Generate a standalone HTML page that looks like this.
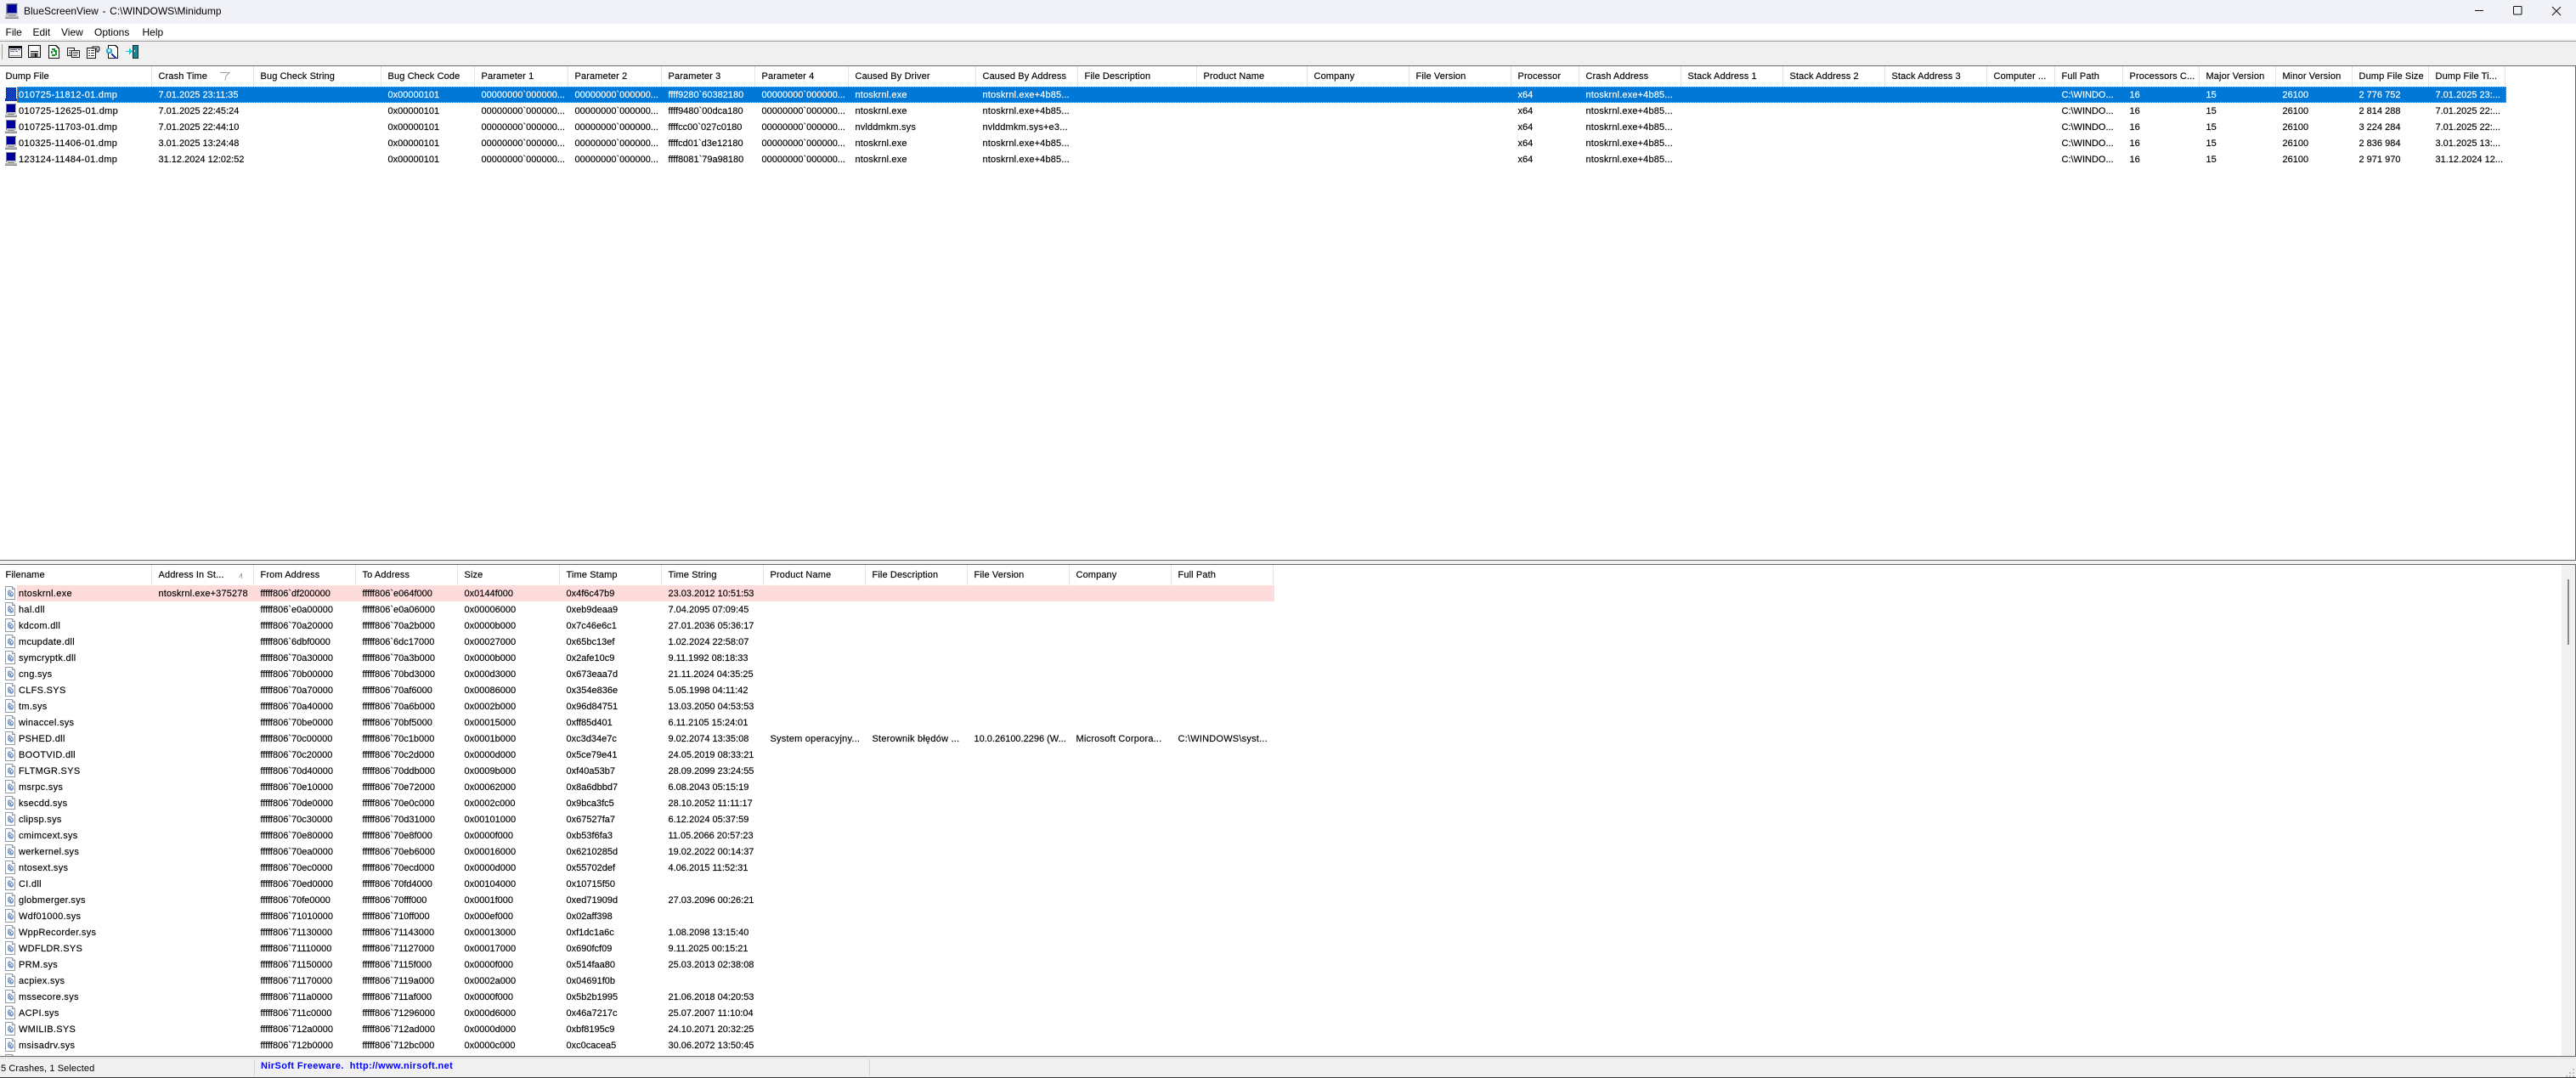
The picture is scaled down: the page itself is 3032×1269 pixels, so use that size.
<!DOCTYPE html>
<html lang="pl"><head><meta charset="utf-8"><title>BlueScreenView</title>
<style>
html,body{margin:0;padding:0;width:3032px;height:1269px;overflow:hidden;background:#fff}
body{position:relative;font-family:"Liberation Sans","DejaVu Sans",sans-serif;font-size:11px;color:#000}
.a{position:absolute}
table{border-collapse:separate;border-spacing:0;table-layout:fixed;position:absolute;left:0;-webkit-text-stroke:.15px currentColor}
th,td{padding:0 0 0 6.5px;margin:0;overflow:hidden;white-space:nowrap;font-weight:normal;text-align:left;box-sizing:border-box}
th{height:25px;line-height:24px;vertical-align:top;border-right:1px solid #e5e5e5;background:linear-gradient(#fff 24px,transparent 24px);letter-spacing:.12px;border-right-color:transparent;background-image:linear-gradient(#e5e5e5,#e5e5e5);background-size:1px 24px;background-position:right top;background-repeat:no-repeat}
td{height:19px;line-height:19px}
td.f{padding-left:22px;position:relative;letter-spacing:.3px}
td.f svg{position:absolute;left:5px;top:0}
tr.s td{color:#fff}
.u td:nth-child(9),.u td:nth-child(10),.u td:nth-child(16){letter-spacing:.15px}
.l td:nth-child(2){letter-spacing:.15px}
.l td:nth-child(8),.l td:nth-child(9),.l td:nth-child(11),.l td:nth-child(12){letter-spacing:.22px}
</style></head><body>
<svg width="0" height="0" style="position:absolute"><defs>
<pattern id="dz" width="2" height="2" patternUnits="userSpaceOnUse"><rect width="2" height="2" fill="#0078d7"/><rect width="1" height="1" fill="#00009a"/><rect x="1" y="1" width="1" height="1" fill="#00009a"/></pattern>
<symbol id="mon" viewBox="0 0 15 16"><path d="M2 0h12v12H2z" fill="#c0c0c0"/><path d="M3 1h10v9H3z" fill="#00009c"/><path d="M2 0h12v1H2zM2 0h1v12H2z" fill="#808080"/><path d="M4 12h8v1H4z" fill="#909090"/><path d="M1 13h14v2H1z" fill="#b8b8b8"/><path d="M1 15h14v1H1z" fill="#808080"/></symbol>
<symbol id="monS" viewBox="0 0 15 16"><path d="M2 0h12v13H2zM1 13h14v3H1z" fill="url(#dz)"/></symbol>
<symbol id="pg" viewBox="0 0 14 16"><path d="M1.5.5h8l3 3v12h-11z" fill="#fff" stroke="#8f9aa5"/><path d="M9.5.5v3h3" fill="#e6e6e6" stroke="#8f9aa5"/><path d="M4 6l2-2 3 2 2 2v3l-2 2-3-1-2-2z" fill="#7d9ecf"/><path d="M5.500 6.500h2.500v1.500h1.500v2H7l-1.500-1.500z" fill="#fff"/><path d="M6 7.500l2 2" stroke="#2b4f9a" stroke-width="1"/></symbol>
</defs></svg>

<div class="a" style="left:0;top:0;width:3032px;height:28px;background:#f0f2f8"></div>
<svg class="a" style="left:5px;top:4px" width="17" height="18" viewBox="0 0 15 16"><use href="#mon"/></svg>
<div class="a" style="left:28px;top:4px;font-size:12px;line-height:18px;white-space:pre;word-spacing:-1px">BlueScreenView  -  C:\WINDOWS\Minidump</div>
<svg class="a" style="left:2900px;top:0" width="132" height="28" fill="none" stroke="#111" stroke-width="1"><path d="M13 12.500h10"/><rect x="58.500" y="7.500" width="9.500" height="9.500" rx="1"/><path d="M104 8l10 10M114 8l-10 10"/></svg>

<div class="a" style="left:0;top:28px;width:3032px;height:18px;background:#fff"></div>
<div class="a" style="left:6.500px;top:29px;font-size:12px;line-height:18px">File</div>
<div class="a" style="left:38.500px;top:29px;font-size:12px;line-height:18px">Edit</div>
<div class="a" style="left:72px;top:29px;font-size:12px;line-height:18px">View</div>
<div class="a" style="left:111px;top:29px;font-size:12px;line-height:18px">Options</div>
<div class="a" style="left:167.500px;top:29px;font-size:12px;line-height:18px">Help</div>

<div class="a" style="left:0;top:46px;width:3032px;height:31px;background:#f0f0f0"></div>
<div class="a" style="left:0;top:48px;width:3032px;height:1px;background:#a0a0a0"></div>
<div class="a" style="left:0;top:77px;width:3032px;height:1px;background:#696969"></div>
<div class="a" style="left:2px;top:52px;width:1px;height:18px;background:#a0a0a0"></div>
<svg class="a" style="left:0;top:50px" width="180" height="26" viewBox="0 50 180 26" shape-rendering="crispEdges">
<path d="M10 54h16v14H10z" fill="#111"/><path d="M11 55h14v2H11z" fill="#111"/><path d="M11 57h14v10H11z" fill="#f4f4f4"/><path d="M12 58h8v1h-8zM21 58h3v1h-3z" fill="#405a90"/><path d="M12 60h5v1h-5zM18 60h3v1h-3z" fill="#777"/><path d="M12 65h12v1H12z" fill="#999"/>
<path d="M33 53h15v15H33z" fill="#111"/><path d="M34 54h13v13H34z" fill="#e8e8e8"/><path d="M36 54h9v6h-9z" fill="#fff"/><path d="M36 60h9v1h-9z" fill="#111"/><path d="M36 62h9v5h-9z" fill="#777"/><path d="M41 63h2v4h-2z" fill="#111"/>
<path d="M57 53h9l4 4v12H57z" fill="#111"/><path d="M58 54h7l4 4v10H58z" fill="#fff"/><path d="M61 57h4v2h2v2h-4v-2h-2zM60 60h2v3h-2zM65 61h2v4h-2zM61 64h4v2h-4z" fill="#0b9a2c"/>
<path d="M79 56h9v10h-9z" fill="#222"/><path d="M80 57h7v8h-7z" fill="#fff"/><path d="M81 59h5v1h-5zM81 61h5v1h-5zM81 63h4v1h-4z" fill="#555"/><path d="M84 59h10v9H84z" fill="#222"/><path d="M85 60h8v7h-8z" fill="#fff"/><path d="M86 61h6v1h-6zM86 63h6v1h-6zM86 65h5v1h-5z" fill="#555"/>
<path d="M102 56h11v13h-11z" fill="#111"/><path d="M103 57h9v11h-9z" fill="#fff"/><path d="M104 59h2v1h-2zM107 59h4v1h-4zM104 62h2v1h-2zM107 62h4v1h-4zM104 65h2v1h-2zM107 65h4v1h-4z" fill="#333"/><path d="M109 55h7v1h1v3h-1v2h-2v-4h-5z" fill="#fff" stroke="#111" stroke-width=".6"/>
<path d="M127 53h9l3 3v13h-12z" fill="#111"/><path d="M128 54h7l3 3v11h-10z" fill="#fff"/><path d="M126 57h5v1h1v4h-1v1h-5v-1h-1v-4h1z" fill="#30a8c8"/><path d="M127 58h3v3h-3z" fill="#c8f0ff"/><path d="M131 63h2v1h1v1h1v1h1v1h1v2h-2v-1h-1v-1h-1v-1h-1v-1h-1z" fill="#1c3fb8"/>
<path d="M156 53h7v16h-7z" fill="#0d2a30"/><path d="M157 54h5v14h-5z" fill="#108b96"/><path d="M158 59h1v2h-1z" fill="#fff"/><path d="M148 60h4v-3h1v1h1v1h1v1h1v1h-1v1h-1v1h-1v1h-1v-3h-4z" fill="#18c8d8"/>
</svg>

<!-- upper list -->
<div class="a" style="left:20px;top:102px;width:2930px;height:19px;background:#0078d7;border:1px dotted #ff9a1e;box-sizing:border-box"></div>
<div class="a" style="left:3031px;top:78px;width:1px;height:581px;background:#696969"></div>
<div class="a" style="left:0;top:659px;width:3032px;height:1px;background:#696969"></div>
<div class="a" style="left:0;top:660px;width:3032px;height:4px;background:#f0f0f0"></div>
<table class="u" style="top:78px;width:2950px">
<colgroup><col style="width:180px"><col style="width:120px"><col style="width:150px"><col style="width:110px"><col style="width:110px"><col style="width:110px"><col style="width:110px"><col style="width:110px"><col style="width:150px"><col style="width:120px"><col style="width:140px"><col style="width:130px"><col style="width:120px"><col style="width:120px"><col style="width:80px"><col style="width:120px"><col style="width:120px"><col style="width:120px"><col style="width:120px"><col style="width:80px"><col style="width:80px"><col style="width:90px"><col style="width:90px"><col style="width:90px"><col style="width:90px"><col style="width:90px"></colgroup>
<tr><th>Dump File</th><th>Crash Time</th><th>Bug Check String</th><th>Bug Check Code</th><th>Parameter 1</th><th>Parameter 2</th><th>Parameter 3</th><th>Parameter 4</th><th>Caused By Driver</th><th>Caused By Address</th><th>File Description</th><th>Product Name</th><th>Company</th><th>File Version</th><th>Processor</th><th>Crash Address</th><th>Stack Address 1</th><th>Stack Address 2</th><th>Stack Address 3</th><th>Computer ...</th><th>Full Path</th><th>Processors C...</th><th>Major Version</th><th>Minor Version</th><th>Dump File Size</th><th>Dump File Ti...</th></tr>
<tr class="s"><td class="f"><svg width="15" height="16"><use href="#monS"/></svg>010725-11812-01.dmp</td><td>7.01.2025 23:11:35</td><td></td><td>0x00000101</td><td>00000000`000000...</td><td>00000000`000000...</td><td>ffff9280`60382180</td><td>00000000`000000...</td><td>ntoskrnl.exe</td><td>ntoskrnl.exe+4b85...</td><td></td><td></td><td></td><td></td><td>x64</td><td>ntoskrnl.exe+4b85...</td><td></td><td></td><td></td><td></td><td>C:\WINDO...</td><td>16</td><td>15</td><td>26100</td><td>2 776 752</td><td>7.01.2025 23:...</td></tr>
<tr><td class="f"><svg width="15" height="16"><use href="#mon"/></svg>010725-12625-01.dmp</td><td>7.01.2025 22:45:24</td><td></td><td>0x00000101</td><td>00000000`000000...</td><td>00000000`000000...</td><td>ffff9480`00dca180</td><td>00000000`000000...</td><td>ntoskrnl.exe</td><td>ntoskrnl.exe+4b85...</td><td></td><td></td><td></td><td></td><td>x64</td><td>ntoskrnl.exe+4b85...</td><td></td><td></td><td></td><td></td><td>C:\WINDO...</td><td>16</td><td>15</td><td>26100</td><td>2 814 288</td><td>7.01.2025 22:...</td></tr>
<tr><td class="f"><svg width="15" height="16"><use href="#mon"/></svg>010725-11703-01.dmp</td><td>7.01.2025 22:44:10</td><td></td><td>0x00000101</td><td>00000000`000000...</td><td>00000000`000000...</td><td>ffffcc00`027c0180</td><td>00000000`000000...</td><td>nvlddmkm.sys</td><td>nvlddmkm.sys+e3...</td><td></td><td></td><td></td><td></td><td>x64</td><td>ntoskrnl.exe+4b85...</td><td></td><td></td><td></td><td></td><td>C:\WINDO...</td><td>16</td><td>15</td><td>26100</td><td>3 224 284</td><td>7.01.2025 22:...</td></tr>
<tr><td class="f"><svg width="15" height="16"><use href="#mon"/></svg>010325-11406-01.dmp</td><td>3.01.2025 13:24:48</td><td></td><td>0x00000101</td><td>00000000`000000...</td><td>00000000`000000...</td><td>ffffcd01`d3e12180</td><td>00000000`000000...</td><td>ntoskrnl.exe</td><td>ntoskrnl.exe+4b85...</td><td></td><td></td><td></td><td></td><td>x64</td><td>ntoskrnl.exe+4b85...</td><td></td><td></td><td></td><td></td><td>C:\WINDO...</td><td>16</td><td>15</td><td>26100</td><td>2 836 984</td><td>3.01.2025 13:...</td></tr>
<tr><td class="f"><svg width="15" height="16"><use href="#mon"/></svg>123124-11484-01.dmp</td><td>31.12.2024 12:02:52</td><td></td><td>0x00000101</td><td>00000000`000000...</td><td>00000000`000000...</td><td>ffff8081`79a98180</td><td>00000000`000000...</td><td>ntoskrnl.exe</td><td>ntoskrnl.exe+4b85...</td><td></td><td></td><td></td><td></td><td>x64</td><td>ntoskrnl.exe+4b85...</td><td></td><td></td><td></td><td></td><td>C:\WINDO...</td><td>16</td><td>15</td><td>26100</td><td>2 971 970</td><td>31.12.2024 12...</td></tr>
</table>
<svg class="a" style="left:258px;top:84px" width="14" height="12" fill="none" stroke="#a0a0a0"><path d="M1 1.500h11L8 5.500 7 10.500"/></svg>

<!-- lower list -->
<div class="a" style="left:0;top:664px;width:3032px;height:1px;background:#696969"></div>
<div class="a" style="left:3031px;top:665px;width:1px;height:578px;background:#696969"></div>
<div class="a" style="left:3015px;top:665px;width:16px;height:578px;background:#f0f0f0"></div>
<div class="a" style="left:3022px;top:682px;width:2px;height:77px;background:#8a8a8a"></div>
<div class="a" style="left:20px;top:689px;width:1480px;height:19px;background:#ffdcdc"></div>
<div class="a" style="left:0;top:665px;width:1500px;height:578px;overflow:hidden">
<table class="l" style="top:0;width:1500px">
<colgroup><col style="width:180px"><col style="width:120px"><col style="width:120px"><col style="width:120px"><col style="width:120px"><col style="width:120px"><col style="width:120px"><col style="width:120px"><col style="width:120px"><col style="width:120px"><col style="width:120px"><col style="width:120px"></colgroup>
<tr><th>Filename</th><th>Address In St...</th><th>From Address</th><th>To Address</th><th>Size</th><th>Time Stamp</th><th>Time String</th><th>Product Name</th><th>File Description</th><th>File Version</th><th>Company</th><th>Full Path</th></tr>
<tr><td class="f"><svg width="14" height="16"><use href="#pg"/></svg>ntoskrnl.exe</td><td>ntoskrnl.exe+375278</td><td>fffff806`df200000</td><td>fffff806`e064f000</td><td>0x0144f000</td><td>0x4f6c47b9</td><td>23.03.2012 10:51:53</td></tr>
<tr><td class="f"><svg width="14" height="16"><use href="#pg"/></svg>hal.dll</td><td></td><td>fffff806`e0a00000</td><td>fffff806`e0a06000</td><td>0x00006000</td><td>0xeb9deaa9</td><td>7.04.2095 07:09:45</td></tr>
<tr><td class="f"><svg width="14" height="16"><use href="#pg"/></svg>kdcom.dll</td><td></td><td>fffff806`70a20000</td><td>fffff806`70a2b000</td><td>0x0000b000</td><td>0x7c46e6c1</td><td>27.01.2036 05:36:17</td></tr>
<tr><td class="f"><svg width="14" height="16"><use href="#pg"/></svg>mcupdate.dll</td><td></td><td>fffff806`6dbf0000</td><td>fffff806`6dc17000</td><td>0x00027000</td><td>0x65bc13ef</td><td>1.02.2024 22:58:07</td></tr>
<tr><td class="f"><svg width="14" height="16"><use href="#pg"/></svg>symcryptk.dll</td><td></td><td>fffff806`70a30000</td><td>fffff806`70a3b000</td><td>0x0000b000</td><td>0x2afe10c9</td><td>9.11.1992 08:18:33</td></tr>
<tr><td class="f"><svg width="14" height="16"><use href="#pg"/></svg>cng.sys</td><td></td><td>fffff806`70b00000</td><td>fffff806`70bd3000</td><td>0x000d3000</td><td>0x673eaa7d</td><td>21.11.2024 04:35:25</td></tr>
<tr><td class="f"><svg width="14" height="16"><use href="#pg"/></svg>CLFS.SYS</td><td></td><td>fffff806`70a70000</td><td>fffff806`70af6000</td><td>0x00086000</td><td>0x354e836e</td><td>5.05.1998 04:11:42</td></tr>
<tr><td class="f"><svg width="14" height="16"><use href="#pg"/></svg>tm.sys</td><td></td><td>fffff806`70a40000</td><td>fffff806`70a6b000</td><td>0x0002b000</td><td>0x96d84751</td><td>13.03.2050 04:53:53</td></tr>
<tr><td class="f"><svg width="14" height="16"><use href="#pg"/></svg>winaccel.sys</td><td></td><td>fffff806`70be0000</td><td>fffff806`70bf5000</td><td>0x00015000</td><td>0xff85d401</td><td>6.11.2105 15:24:01</td></tr>
<tr><td class="f"><svg width="14" height="16"><use href="#pg"/></svg>PSHED.dll</td><td></td><td>fffff806`70c00000</td><td>fffff806`70c1b000</td><td>0x0001b000</td><td>0xc3d34e7c</td><td>9.02.2074 13:35:08</td><td>System operacyjny...</td><td>Sterownik błędów ...</td><td>10.0.26100.2296 (W...</td><td>Microsoft Corpora...</td><td>C:\WINDOWS\syst...</td></tr>
<tr><td class="f"><svg width="14" height="16"><use href="#pg"/></svg>BOOTVID.dll</td><td></td><td>fffff806`70c20000</td><td>fffff806`70c2d000</td><td>0x0000d000</td><td>0x5ce79e41</td><td>24.05.2019 08:33:21</td></tr>
<tr><td class="f"><svg width="14" height="16"><use href="#pg"/></svg>FLTMGR.SYS</td><td></td><td>fffff806`70d40000</td><td>fffff806`70ddb000</td><td>0x0009b000</td><td>0xf40a53b7</td><td>28.09.2099 23:24:55</td></tr>
<tr><td class="f"><svg width="14" height="16"><use href="#pg"/></svg>msrpc.sys</td><td></td><td>fffff806`70e10000</td><td>fffff806`70e72000</td><td>0x00062000</td><td>0x8a6dbbd7</td><td>6.08.2043 05:15:19</td></tr>
<tr><td class="f"><svg width="14" height="16"><use href="#pg"/></svg>ksecdd.sys</td><td></td><td>fffff806`70de0000</td><td>fffff806`70e0c000</td><td>0x0002c000</td><td>0x9bca3fc5</td><td>28.10.2052 11:11:17</td></tr>
<tr><td class="f"><svg width="14" height="16"><use href="#pg"/></svg>clipsp.sys</td><td></td><td>fffff806`70c30000</td><td>fffff806`70d31000</td><td>0x00101000</td><td>0x67527fa7</td><td>6.12.2024 05:37:59</td></tr>
<tr><td class="f"><svg width="14" height="16"><use href="#pg"/></svg>cmimcext.sys</td><td></td><td>fffff806`70e80000</td><td>fffff806`70e8f000</td><td>0x0000f000</td><td>0xb53f6fa3</td><td>11.05.2066 20:57:23</td></tr>
<tr><td class="f"><svg width="14" height="16"><use href="#pg"/></svg>werkernel.sys</td><td></td><td>fffff806`70ea0000</td><td>fffff806`70eb6000</td><td>0x00016000</td><td>0x6210285d</td><td>19.02.2022 00:14:37</td></tr>
<tr><td class="f"><svg width="14" height="16"><use href="#pg"/></svg>ntosext.sys</td><td></td><td>fffff806`70ec0000</td><td>fffff806`70ecd000</td><td>0x0000d000</td><td>0x55702def</td><td>4.06.2015 11:52:31</td></tr>
<tr><td class="f"><svg width="14" height="16"><use href="#pg"/></svg>CI.dll</td><td></td><td>fffff806`70ed0000</td><td>fffff806`70fd4000</td><td>0x00104000</td><td>0x10715f50</td><td></td></tr>
<tr><td class="f"><svg width="14" height="16"><use href="#pg"/></svg>globmerger.sys</td><td></td><td>fffff806`70fe0000</td><td>fffff806`70fff000</td><td>0x0001f000</td><td>0xed71909d</td><td>27.03.2096 00:26:21</td></tr>
<tr><td class="f"><svg width="14" height="16"><use href="#pg"/></svg>Wdf01000.sys</td><td></td><td>fffff806`71010000</td><td>fffff806`710ff000</td><td>0x000ef000</td><td>0x02aff398</td><td></td></tr>
<tr><td class="f"><svg width="14" height="16"><use href="#pg"/></svg>WppRecorder.sys</td><td></td><td>fffff806`71130000</td><td>fffff806`71143000</td><td>0x00013000</td><td>0xf1dc1a6c</td><td>1.08.2098 13:15:40</td></tr>
<tr><td class="f"><svg width="14" height="16"><use href="#pg"/></svg>WDFLDR.SYS</td><td></td><td>fffff806`71110000</td><td>fffff806`71127000</td><td>0x00017000</td><td>0x690fcf09</td><td>9.11.2025 00:15:21</td></tr>
<tr><td class="f"><svg width="14" height="16"><use href="#pg"/></svg>PRM.sys</td><td></td><td>fffff806`71150000</td><td>fffff806`7115f000</td><td>0x0000f000</td><td>0x514faa80</td><td>25.03.2013 02:38:08</td></tr>
<tr><td class="f"><svg width="14" height="16"><use href="#pg"/></svg>acpiex.sys</td><td></td><td>fffff806`71170000</td><td>fffff806`7119a000</td><td>0x0002a000</td><td>0x04691f0b</td><td></td></tr>
<tr><td class="f"><svg width="14" height="16"><use href="#pg"/></svg>mssecore.sys</td><td></td><td>fffff806`711a0000</td><td>fffff806`711af000</td><td>0x0000f000</td><td>0x5b2b1995</td><td>21.06.2018 04:20:53</td></tr>
<tr><td class="f"><svg width="14" height="16"><use href="#pg"/></svg>ACPI.sys</td><td></td><td>fffff806`711c0000</td><td>fffff806`71296000</td><td>0x000d6000</td><td>0x46a7217c</td><td>25.07.2007 11:10:04</td></tr>
<tr><td class="f"><svg width="14" height="16"><use href="#pg"/></svg>WMILIB.SYS</td><td></td><td>fffff806`712a0000</td><td>fffff806`712ad000</td><td>0x0000d000</td><td>0xbf8195c9</td><td>24.10.2071 20:32:25</td></tr>
<tr><td class="f"><svg width="14" height="16"><use href="#pg"/></svg>msisadrv.sys</td><td></td><td>fffff806`712b0000</td><td>fffff806`712bc000</td><td>0x0000c000</td><td>0xc0cacea5</td><td>30.06.2072 13:50:45</td></tr>
<tr><td class="f"><svg width="14" height="16"><use href="#pg"/></svg></td></tr>
</table>
</div>
<svg class="a" style="left:277px;top:672px" width="12" height="12" fill="none" stroke="#a0a0a0"><path d="M7.500 3v6M7.500 3L4.500 8"/></svg>

<!-- status bar -->
<div class="a" style="left:0;top:1243px;width:3032px;height:1px;background:#696969"></div>
<div class="a" style="left:0;top:1244px;width:3032px;height:24px;background:#f0f0f0"></div>
<div class="a" style="left:0;top:1245px;width:3032px;height:1px;background:#dcdcdc"></div>
<div class="a" style="left:0;top:1268px;width:3032px;height:1px;background:#3a3a3a"></div>
<div class="a" style="left:299px;top:1247px;width:1px;height:20px;background:#d4d4d4"></div>
<div class="a" style="left:1023px;top:1247px;width:1px;height:20px;background:#d4d4d4"></div>
<div class="a" style="left:1px;top:1249px;line-height:18px;white-space:pre;letter-spacing:.1px">5 Crashes, 1 Selected</div>
<div class="a" style="left:307px;top:1246px;line-height:18px;font-weight:bold;color:#0000ff;white-space:pre;letter-spacing:.4px">NirSoft Freeware.  http://www.nirsoft.net</div>
<svg class="a" style="left:3020px;top:1256px" width="12" height="12" shape-rendering="crispEdges" fill="#bdbdbd"><path d="M8 2h2v2H8zM4 6h2v2H4zM8 6h2v2H8zM0 10h2v2H0zM4 10h2v2H4zM8 10h2v2H8z"/></svg>
</body></html>
